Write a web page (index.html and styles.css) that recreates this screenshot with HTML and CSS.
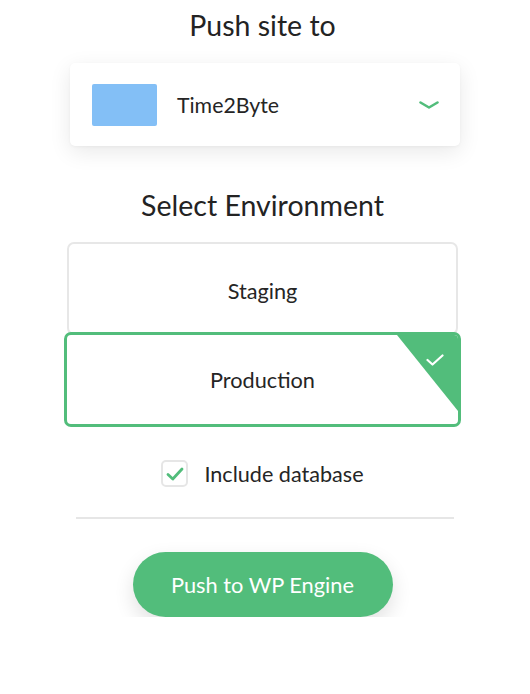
FILE: index.html
```html
<!DOCTYPE html>
<html>
<head>
<meta charset="utf-8">
<link rel="stylesheet" href="styles.css">
</head>
<body>
<div class="page">
  <h1 class="heading heading-top">Push site to</h1>
  <div class="site-select">
    <div class="site-thumb"></div>
    <div class="site-name">Time2Byte</div>
    <svg class="chevron" width="20" height="8" viewBox="0 0 20 8"><path d="M1.5 1.5 L10 6.5 L18.5 1.5" fill="none" stroke="#52bd7b" stroke-width="2.6" stroke-linecap="round" stroke-linejoin="round"/></svg>
  </div>
  <h2 class="heading heading-env">Select Environment</h2>
  <div class="env-list">
    <div class="env env-staging">Staging</div>
    <div class="env env-selected">Production
      <svg class="env-check" width="18" height="12" viewBox="0 0 18 12"><path d="M1.5 6 L6.5 10.5 L16.5 1.5" fill="none" stroke="#fff" stroke-width="2.2" stroke-linecap="round" stroke-linejoin="round"/></svg>
    </div>
  </div>
  <label class="db-row">
    <span class="checkbox"><svg width="18" height="14" viewBox="0 0 18 14"><path d="M2 7.5 L6.8 12 L16 2" fill="none" stroke="#52bd7b" stroke-width="2.8" stroke-linecap="round" stroke-linejoin="round"/></svg></span>
    <span class="db-label">Include database</span>
  </label>
  <div class="divider"></div>
  <button class="push-btn">Push to WP Engine</button>
</div>
</body>
</html>
```
FILE: styles.css
```css
* { box-sizing: border-box; }
html, body { margin: 0; padding: 0; background: #fff; }
body {
  font-family: Lato, "Open Sans", sans-serif;
  color: #252525;
}
.page {
  width: 525px;
  display: flex;
  flex-direction: column;
  align-items: center;
}
.heading {
  margin: 0;
  font-weight: 400;
  font-size: 28.5px;
  text-align: center;
  color: #232323;
}
.heading-top {
  height: 50px;
  line-height: 50px;
}
.heading-env {
  margin-top: 42px;
  height: 34px;
  line-height: 34px;
}
.site-select {
  margin-top: 13px;
  margin-left: 5px;
  width: 390px;
  height: 83px;
  background: #fff;
  border-radius: 5px;
  box-shadow: 0 6px 22px rgba(0,0,0,0.09), 0 1px 3px rgba(0,0,0,0.04);
  display: flex;
  align-items: center;
  padding: 0 21px 0 22px;
}
.site-thumb {
  width: 65px;
  height: 42px;
  background: #83bff6;
  border-radius: 2px;
}
.site-name {
  margin-left: 20px;
  font-size: 21.3px;
  flex: 1;
}
.chevron { display: block; }
.env-list {
  margin-top: 20px;
  display: flex;
  flex-direction: column;
  align-items: center;
}
.env {
  display: flex;
  align-items: center;
  justify-content: center;
  font-size: 21.7px;
  color: #252525;
  background: #fff;
}
.env-staging {
  width: 391px;
  height: 93px;
  border: 2px solid #e7e7e7;
  border-radius: 7px;
  padding-top: 5px;
}
.env-selected {
  position: relative;
  width: 397px;
  height: 95px;
  margin-top: -3px;
  border: 3px solid #52bd7b;
  border-radius: 7px;
  overflow: hidden;
}
.env-selected::before {
  content: "";
  position: absolute;
  top: 0;
  right: 0;
  width: 61px;
  height: 76px;
  background: #52bd7b;
  clip-path: polygon(0 0, 100% 0, 100% 100%);
}
.env-check {
  position: absolute;
  top: 19px;
  right: 14px;
}
.db-row {
  margin-top: 33px;
  display: flex;
  align-items: center;
  height: 27px;
}
.checkbox {
  width: 27px;
  height: 27px;
  border: 2px solid #e6e6e6;
  border-radius: 5px;
  display: flex;
  align-items: center;
  justify-content: center;
}
.db-label {
  margin-left: 16px;
  font-size: 21.6px;
}
.divider {
  margin-top: 30px;
  margin-left: 5px;
  width: 378px;
  height: 2px;
  background: #e6e6e6;
}
.push-btn {
  margin-top: 33px;
  width: 260px;
  height: 65px;
  border: none;
  border-radius: 33px;
  background: #52bd7b;
  color: #fff;
  font-family: Lato, "Open Sans", sans-serif;
  font-size: 21.8px;
  box-shadow: 0 8px 20px rgba(0,0,0,0.12);
}
```
